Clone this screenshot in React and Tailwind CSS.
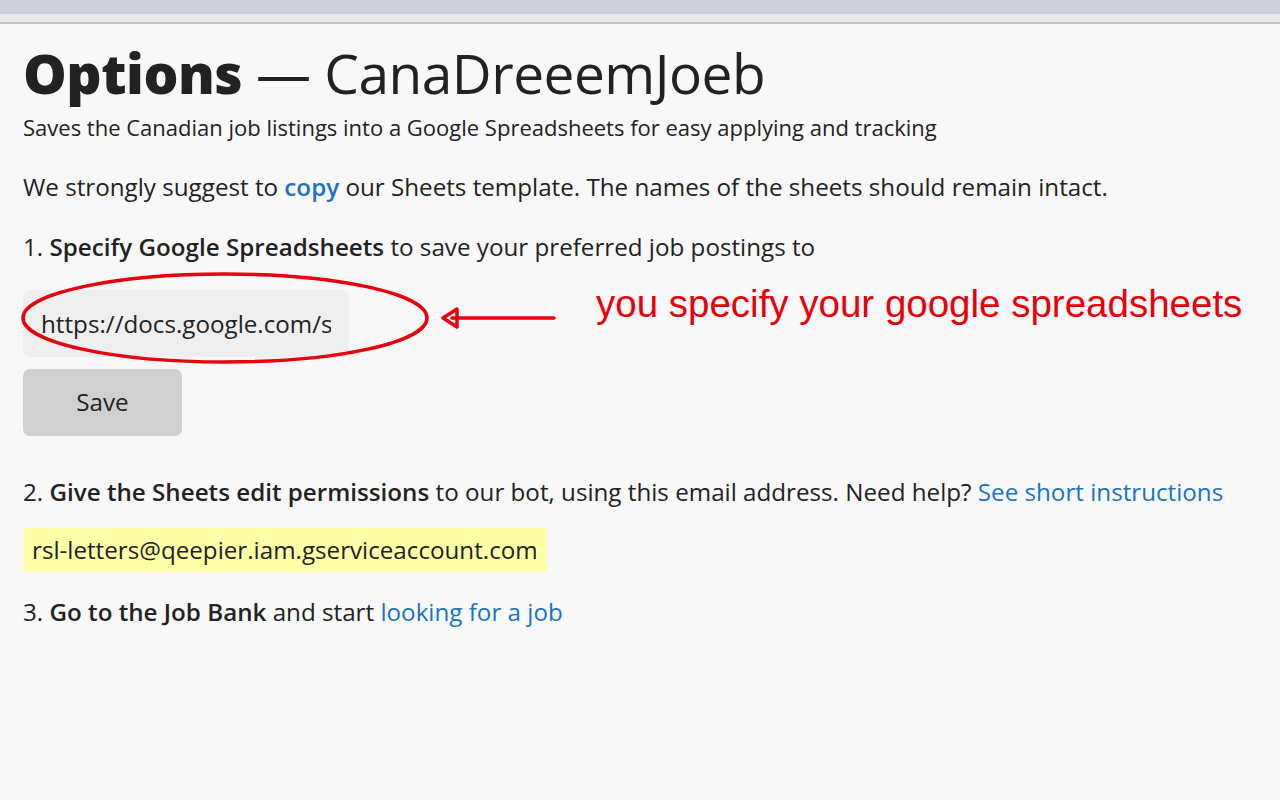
import React from 'react';

const font = { fontFamily: '"Open Sans", "Noto Sans", sans-serif' };

function Annotation() {
  return (
    <>
      <svg className="absolute left-0 top-0 pointer-events-none" width="1280" height="800">
        <ellipse cx="225" cy="318" rx="202" ry="44" fill="none" stroke="#e8000b" strokeWidth="3.5" />
        <line x1="452" y1="318" x2="554" y2="318" stroke="#e8000b" strokeWidth="3.5" strokeLinecap="round" />
        <path d="M457 309 L443 318 L457 327 Z" fill="none" stroke="#e8000b" strokeWidth="3.5" strokeLinejoin="round" />
      </svg>
      <div
        className="absolute left-[596px] top-[281px] whitespace-nowrap text-[38.5px] leading-[46px] text-[#e8000b]"
        style={{ fontFamily: '"Liberation Sans", Arial, sans-serif' }}
      >
        you specify your google spreadsheets
      </div>
    </>
  );
}

export default function App() {
  return (
    <div className="w-[1280px] h-[800px] overflow-hidden bg-[#f8f8f8] text-[#222]" style={font}>
      <div className="h-[14px] bg-[#cbcfd8]" />
      <div className="h-[8px] bg-[#e9e9eb]" />
      <div className="h-[2px] bg-[#c3c3c5]" />
      <main className="relative px-[23px]">
        <h1 className="pt-[16px] text-[55px] leading-[66px] tracking-[-0.5px]">
          <span className="font-extrabold">Options</span>
          <span className="font-normal"> — CanaDreeemJoeb</span>
        </h1>
        <p className="mt-[7px] text-[22px] leading-[28px]">
          Saves the Canadian job listings into a Google Spreadsheets for easy applying and tracking
        </p>
        <p className="mt-[30px] text-[24.2px] leading-[32px]">
          We strongly suggest to <a className="text-[#1a73c4] font-semibold">copy</a> our Sheets template. The names of the sheets should remain intact.
        </p>
        <p className="mt-[28px] text-[24.2px] leading-[32px]">
          1. <b className="font-semibold">Specify Google Spreadsheets</b> to save your preferred job postings to
        </p>
        <div className="mt-[27px] flex flex-col items-start gap-[12px]">
          <input
            readOnly
            value="https://docs.google.com/spreadsheets/d/"
            className="w-[326px] h-[67px] bg-[#efefef] rounded-[7px] px-[18px] text-[24.2px] text-[#222] outline-none"
            style={font}
          />
          <button className="w-[159px] h-[67px] bg-[#d0d0d0] rounded-[7px] text-[24.2px]">Save</button>
        </div>
        <p className="mt-[40px] text-[24.2px] leading-[32px]">
          2. <b className="font-semibold">Give the Sheets edit permissions</b> to our bot, using this email address. Need help?{' '}
          <a className="text-[#1a73c4]">See short instructions</a>
        </p>
        <div className="mt-[20px] inline-block bg-[#ffffa8] px-[9px] h-[44px] leading-[44px] text-[24.2px]">
          rsl-letters@qeepier.iam.gserviceaccount.com
        </div>
        <p className="mt-[24px] text-[24.2px] leading-[32px]">
          3. <b className="font-semibold">Go to the Job Bank</b> and start <a className="text-[#1a73c4]">looking for a job</a>
        </p>
        <div className="absolute left-0 top-[-24px]">
          <Annotation />
        </div>
      </main>
    </div>
  );
}
